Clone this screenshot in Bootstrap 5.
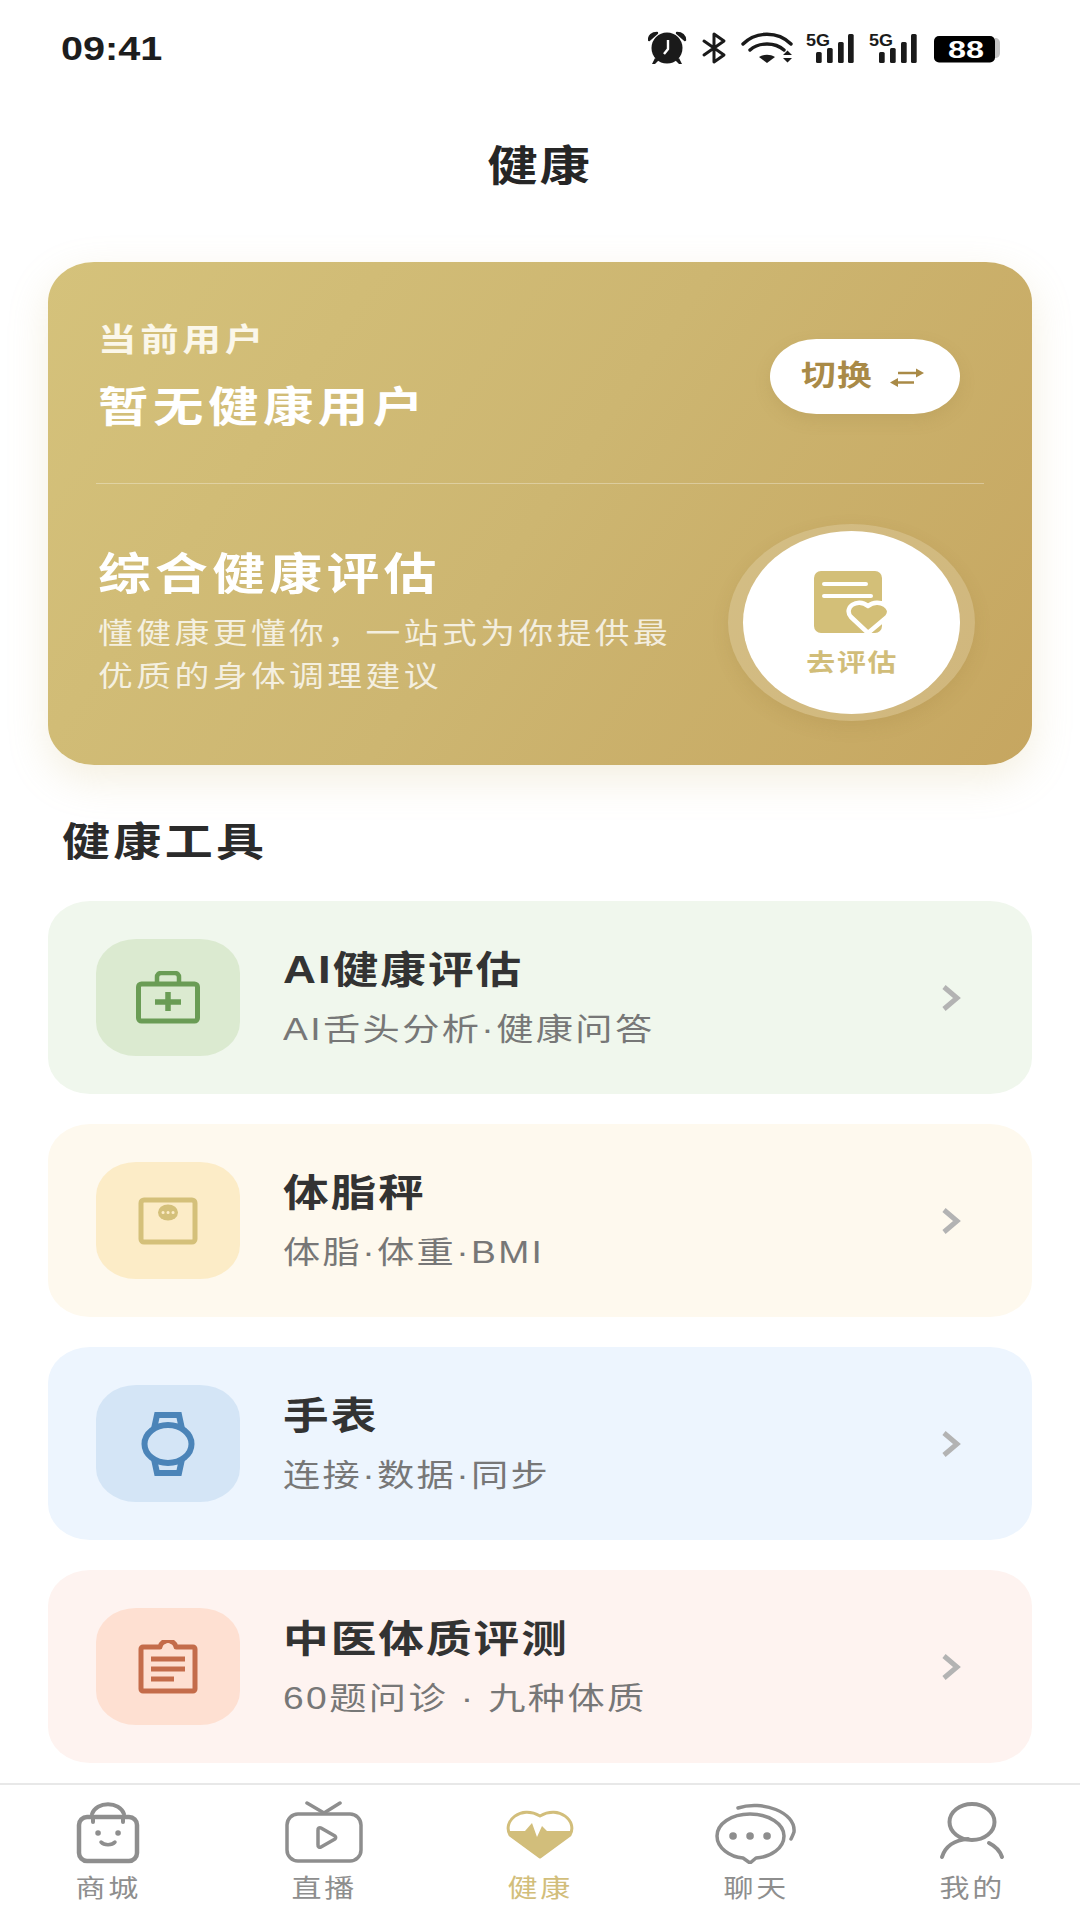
<!DOCTYPE html>
<html lang="zh-CN">
<head>
    <meta charset="UTF-8">
    <title>健康</title>
    <link href="https://cdn.jsdelivr.net/npm/bootstrap@5.3.0/dist/css/bootstrap.min.css" rel="stylesheet">
    <style>
        html, body { height: 100%; }
        body { font-family: "Liberation Sans", "Noto Sans CJK SC", sans-serif; background: #fff; color: #2b2b2b; }
        .phone { width: 1080px; height: 1920px; overflow: hidden; }

        /* the whole picture is a bit wider than tall, glyphs too */
        .wide { display: inline-block; transform: scaleX(1.2); transform-origin: 0 50%; white-space: nowrap; }
        .wide-c { display: inline-block; transform: scaleX(1.2); transform-origin: 50% 50%; white-space: nowrap; }

        .status-row { height: 96px; padding: 0 80px 0 61px; }
        .clock { font-size: 33px; font-weight: 700; line-height: 1; color: #1d1d1d; }
        .page-title { height: 142px; line-height: 142px; font-size: 42px; font-weight: 700; letter-spacing: 1.5px; color: #262626; }

        .hero { margin: 24px 48px 0; height: 503px; border: 0; color: #fff;
            border-radius: 46px / 40px;
            background: linear-gradient(125deg, #d5c27b 0%, #cdb671 50%, #c6a660 100%);
            box-shadow: 0 14px 40px rgba(205, 180, 115, .22); }
        .hero-top { height: 221px; padding: 8px 72px 0 50px; }
        .who-block { padding-bottom: 6px; }
        .who-label { font-size: 32px; font-weight: 700; line-height: 68px; letter-spacing: 3.2px; color: #fbf7ea; }
        .who-name { font-size: 42px; font-weight: 700; line-height: 68px; letter-spacing: 3.8px; }
        .switch-btn { width: 190px; height: 75px; border: 0; padding: 0 5px 0 0; background: #fff; color: #a98a47;
            border-radius: 47px / 38px; font-size: 29px; font-weight: 700; box-shadow: 0 6px 16px rgba(150, 120, 60, .18); }
        .switch-btn:hover { background: #fff; color: #a98a47; }
        .switch-txt { width: 70px; text-align: left; letter-spacing: 1px; }
        .hero-rule { height: 1px; margin: 0 48px; background: rgba(255, 255, 255, .32); }
        .hero-bottom { flex: 1; padding: 0 57px 5px 50px; }
        .assess-title { font-size: 44px; font-weight: 700; line-height: 60px; letter-spacing: 3.6px; margin-bottom: 8px; }
        .assess-desc { font-size: 29px; line-height: 43px; letter-spacing: 2.85px; color: rgba(255, 255, 255, .78); }
        .go-ring { padding: 7px 15px; border-radius: 50%; background: rgba(255, 255, 255, .17); box-shadow: 0 6px 18px rgba(130, 100, 40, .12); }
        .go-disc { width: 217px; height: 183px; border-radius: 50%; background: #fff; color: #d1bd79; gap: 17px; }
        .go-label { font-size: 24px; font-weight: 700; line-height: 1; letter-spacing: 1.5px; margin-left: 2px; }

        .tools-head { height: 136px; padding: 18px 0 0 62px; line-height: 118px; font-size: 40px; font-weight: 700; letter-spacing: 2.8px; color: #2b2b2b; }
        .tool-list { margin: 0 48px; gap: 30px; }
        .tool-row { height: 193px; border: 0; padding: 0 70px 0 48px; border-radius: 42px / 36px; }
        .tool-icon { width: 144px; height: 117px; border-radius: 40px / 34px; flex: none; }
        .tool-text { margin-left: 43px; }
        .tool-name { font-size: 38px; font-weight: 700; line-height: 56px; letter-spacing: 1.7px; color: #333; }
        .tool-sub { font-size: 31px; line-height: 48px; margin-top: 8px; letter-spacing: 2px; color: #777; }
        .tint-green { background: #f0f7ed; } .tint-green .tool-icon { background: #dbead0; }
        .tint-yellow { background: #fef9ee; } .tint-yellow .tool-icon { background: #fcecc7; }
        .tint-blue { background: #edf5fe; } .tint-blue .tool-icon { background: #d4e5f6; }
        .tint-red { background: #fef3f0; } .tint-red .tool-icon { background: #fee0d2; }

        .tab-bar { border-top: 2px solid #e8e8e8; height: 137px; }
        .tab-item { color: #8e8e8e; padding: 0; }
        .tab-item:hover, .tab-item:focus { color: #8e8e8e; }
        .tab-item.active-tab { color: #d2be7b; }
        .tab-art { height: 79px; }
        .tab-label { font-size: 25px; line-height: 48px; letter-spacing: 2.3px; }
    </style>
</head>
<body>
<div class="phone d-flex flex-column">

    <!-- status bar -->
    <div class="status-row d-flex align-items-center justify-content-between">
        <span class="clock wide">09:41</span>
        <svg width="352" height="34" viewBox="648 31 352 34" aria-hidden="true">
            <!-- alarm -->
            <g fill="#1a1a1a">
                <circle cx="667" cy="48" r="15.5"/>
                <path d="M649 40c0-4 3-7 8-7l-8 7zM685 40c0-4-3-7-8-7l8 7z" stroke="#1a1a1a" stroke-width="2.4" stroke-linejoin="round"/>
                <path d="M655 58l-3 6h3l4-4zM679 58l3 6h-3l-4-4z"/>
            </g>
            <path d="M668 40v9l-4 5" fill="none" stroke="#fff" stroke-width="2.4"/>
            <!-- bluetooth -->
            <path d="M704 41l20 14-10 7V34l10 7-20 14" fill="none" stroke="#1a1a1a" stroke-width="3" stroke-linejoin="round" stroke-linecap="round"/>
            <!-- wifi -->
            <g fill="none" stroke="#1a1a1a" stroke-width="3.4" stroke-linecap="round">
                <path d="M743 44c13-13 35-13 48 0"/>
                <path d="M750 50c9-8 25-8 34 0"/>
            </g>
            <path d="M759 57c5-3 11-3 16 0l-8 6z" fill="#1a1a1a"/>
            <path d="M783 55l4.500-4.500 4.500 4.500zM783 58h9l-4.500 4.500z" fill="#1a1a1a"/>
            <!-- 5G signal -->
            <g fill="#1a1a1a" font-family="Liberation Sans, sans-serif" font-weight="700" font-size="16">
                <text x="806" y="46" textLength="24" lengthAdjust="spacingAndGlyphs">5G</text>
                <rect x="816" y="52" width="5.700" height="11" rx="1.500"/><rect x="827" y="48" width="5.700" height="15" rx="1.500"/><rect x="838" y="42" width="5.700" height="21" rx="1.500"/><rect x="848" y="34" width="5.700" height="29" rx="1.500"/>
                <text x="869" y="46" textLength="24" lengthAdjust="spacingAndGlyphs">5G</text>
                <rect x="879" y="52" width="5.700" height="11" rx="1.500"/><rect x="890" y="48" width="5.700" height="15" rx="1.500"/><rect x="901" y="42" width="5.700" height="21" rx="1.500"/><rect x="911" y="34" width="5.700" height="29" rx="1.500"/>
            </g>
            <!-- battery -->
            <path d="M995 38c3 0 5 2 5 5v10c0 3-2 5-5 5z" fill="#c4c4c4"/>
            <rect x="934" y="36" width="61" height="26.500" rx="5" fill="#000"/>
            <text x="948" y="58" textLength="36" lengthAdjust="spacingAndGlyphs" fill="#fff" font-family="Liberation Sans, sans-serif" font-weight="700" font-size="24">88</text>
        </svg>
    </div>

    <div class="page-title text-center"><span class="wide-c">健康</span></div>

    <!-- current user + assessment -->
    <div class="card hero">
        <div class="hero-top d-flex align-items-center justify-content-between">
            <div class="who-block">
                <div class="who-label"><span class="wide">当前用户</span></div>
                <div class="who-name"><span class="wide">暂无健康用户</span></div>
            </div>
            <button type="button" class="btn switch-btn d-flex align-items-center justify-content-center">
                <span class="switch-txt"><span class="wide">切换</span></span>
                <svg class="ms-3" width="38" height="22" viewBox="0 0 38 22" aria-hidden="true">
                    <path d="M11 7h20M27 16.500H8" stroke="#a98a47" stroke-width="2.600" fill="none"/>
                    <path d="M29 2.500L37 7l-8 4.500zM11 12L3 16.500l8 4.500z" fill="#a98a47"/>
                </svg>
            </button>
        </div>
        <div class="hero-rule"></div>
        <div class="hero-bottom d-flex align-items-center justify-content-between">
            <div>
                <div class="assess-title"><span class="wide">综合健康评估</span></div>
                <div class="assess-desc"><span class="wide">懂健康更懂你，一站式为你提供最</span></div>
                <div class="assess-desc"><span class="wide">优质的身体调理建议</span></div>
            </div>
            <div class="go-ring">
                <div class="go-disc d-flex flex-column align-items-center justify-content-center">
                    <svg width="78" height="64" viewBox="0 0 78 64" aria-hidden="true">
                        <rect x="1" y="1" width="68" height="62" rx="7" fill="#d3bf78"/>
                        <path d="M11 14h42M11 26h47" stroke="#fff" stroke-width="4" stroke-linecap="round"/>
                        <path d="M55 63L38 47c-8-9 6-20 17-11 11-9 27 2 19 11z" fill="#d3bf78" stroke="#fff" stroke-width="4.500" stroke-linejoin="round"/>
                    </svg>
                    <span class="go-label wide-c">去评估</span>
                </div>
            </div>
        </div>
    </div>

    <div class="tools-head"><span class="wide">健康工具</span></div>

    <div class="tool-list d-flex flex-column">
        <div class="card tool-row tint-green flex-row align-items-center">
            <div class="tool-icon d-flex align-items-center justify-content-center">
                <svg width="66" height="53" viewBox="0 0 66 53" aria-hidden="true">
                    <rect x="3.500" y="13" width="59" height="37" rx="3" fill="none" stroke="#6a9c55" stroke-width="5"/>
                    <path d="M22 13V6a4 4 0 0 1 4-4h14a4 4 0 0 1 4 4v7" fill="none" stroke="#6a9c55" stroke-width="4.500"/>
                    <path d="M33 21v19M20 31h26" stroke="#6a9c55" stroke-width="5.500"/>
                </svg>
            </div>
            <div class="tool-text flex-grow-1">
                <div class="tool-name"><span class="wide">AI健康评估</span></div>
                <div class="tool-sub"><span class="wide">AI舌头分析·健康问答</span></div>
            </div>
            <svg width="22" height="30" viewBox="0 0 22 30" aria-hidden="true"><path d="M4 4l13 11L4 26" fill="none" stroke="#b3b3b3" stroke-width="5"/></svg>
        </div>

        <div class="card tool-row tint-yellow flex-row align-items-center">
            <div class="tool-icon d-flex align-items-center justify-content-center">
                <svg width="60" height="48" viewBox="0 0 60 48" aria-hidden="true">
                    <rect x="3" y="3" width="54" height="42" rx="3" fill="none" stroke="#d4c07a" stroke-width="5"/>
                    <ellipse cx="30" cy="15.500" rx="10" ry="8" fill="#d4c07a"/>
                    <path d="M25 15.500h.1M30 15.500h.1M35 15.500h.1" stroke="#fcecc7" stroke-width="3" stroke-linecap="round"/>
                </svg>
            </div>
            <div class="tool-text flex-grow-1">
                <div class="tool-name"><span class="wide">体脂秤</span></div>
                <div class="tool-sub"><span class="wide">体脂·体重·BMI</span></div>
            </div>
            <svg width="22" height="30" viewBox="0 0 22 30" aria-hidden="true"><path d="M4 4l13 11L4 26" fill="none" stroke="#b3b3b3" stroke-width="5"/></svg>
        </div>

        <div class="card tool-row tint-blue flex-row align-items-center">
            <div class="tool-icon d-flex align-items-center justify-content-center">
                <svg width="54" height="64" viewBox="0 0 54 64" aria-hidden="true">
                    <ellipse cx="27" cy="32" rx="23.500" ry="19" fill="none" stroke="#4b84b8" stroke-width="6"/>
                    <path d="M13 17L16 3h22l3 14M13 47l3 14h22l3-14" fill="none" stroke="#4b84b8" stroke-width="6"/>
                </svg>
            </div>
            <div class="tool-text flex-grow-1">
                <div class="tool-name"><span class="wide">手表</span></div>
                <div class="tool-sub"><span class="wide">连接·数据·同步</span></div>
            </div>
            <svg width="22" height="30" viewBox="0 0 22 30" aria-hidden="true"><path d="M4 4l13 11L4 26" fill="none" stroke="#b3b3b3" stroke-width="5"/></svg>
        </div>

        <div class="card tool-row tint-red flex-row align-items-center">
            <div class="tool-icon d-flex align-items-center justify-content-center">
                <svg width="60" height="54" viewBox="0 0 60 54" aria-hidden="true">
                    <path d="M22 7c1-8 15-8 16 0h17a2 2 0 0 1 2 2v40a2 2 0 0 1-2 2H5a2 2 0 0 1-2-2V9a2 2 0 0 1 2-2z" fill="#c46c4a" fill-opacity="0" stroke="#c46c4a" stroke-width="5" stroke-linejoin="round"/>
                    <circle cx="30" cy="5.500" r="2.500" fill="#fee0d2"/>
                    <path d="M13 19h34M13 29h34M13 39h23" stroke="#c46c4a" stroke-width="5"/>
                </svg>
            </div>
            <div class="tool-text flex-grow-1">
                <div class="tool-name"><span class="wide">中医体质评测</span></div>
                <div class="tool-sub"><span class="wide">60题问诊 · 九种体质</span></div>
            </div>
            <svg width="22" height="30" viewBox="0 0 22 30" aria-hidden="true"><path d="M4 4l13 11L4 26" fill="none" stroke="#b3b3b3" stroke-width="5"/></svg>
        </div>
    </div>

    <!-- bottom tabs -->
    <nav class="nav nav-justified tab-bar mt-auto">
        <a class="nav-link tab-item" href="#">
            <div class="tab-art d-flex align-items-end justify-content-center">
                <svg width="66" height="62" viewBox="0 0 66 62" fill="none" stroke="#8e8e8e" stroke-linecap="round" aria-hidden="true">
                    <path d="M17 12C21-1 45-1 49 12" stroke-width="4"/>
                    <rect x="4" y="15" width="58" height="44" rx="8" stroke-width="4.500"/>
                    <path d="M18 15v5M48 15v5" stroke-width="4"/>
                    <path d="M23 31h.1M43 31h.1" stroke-width="5.500"/>
                    <path d="M26 40c3 3.500 11 3.500 14 0" stroke-width="3.500"/>
                </svg>
            </div>
            <div class="tab-label"><span class="wide-c">商城</span></div>
        </a>
        <a class="nav-link tab-item" href="#">
            <div class="tab-art d-flex align-items-end justify-content-center">
                <svg width="78" height="63" viewBox="0 0 78 63" fill="none" stroke="#8e8e8e" stroke-linecap="round" stroke-linejoin="round" aria-hidden="true">
                    <path d="M22 2l17 10L55 2" stroke-width="3.500"/>
                    <rect x="2" y="13" width="74" height="47" rx="11" stroke-width="3.500"/>
                    <path d="M33 29a2 2 0 0 1 3-2l14 8a2 2 0 0 1 0 3l-14 8a2 2 0 0 1-3-2z" stroke-width="3.500"/>
                </svg>
            </div>
            <div class="tab-label"><span class="wide-c">直播</span></div>
        </a>
        <a class="nav-link tab-item active-tab" href="#">
            <div class="tab-art d-flex align-items-end justify-content-center">
                <svg width="70" height="52" viewBox="0 0 70 52" aria-hidden="true" class="mb-1">
                    <path d="M35 49L5 27C-3 13 16-3 35 8c19-11 38 5 30 19z" fill="#fff" stroke="#d2be7b" stroke-width="3" stroke-linejoin="round"/>
                    <path d="M3 23h17l7-8 5 14 5-11 5 5h25c-1 3-2 5-4 6L35 50 5 28c-1-1-2-3-2-5z" fill="#d2be7b"/>
                </svg>
            </div>
            <div class="tab-label"><span class="wide-c">健康</span></div>
        </a>
        <a class="nav-link tab-item" href="#">
            <div class="tab-art d-flex align-items-end justify-content-center">
                <svg width="82" height="62" viewBox="0 0 82 62" fill="none" stroke="#8e8e8e" stroke-linecap="round" aria-hidden="true">
                    <path d="M23 6c24-8 58 4 56 24-1 3-2 5-3 7" stroke-width="3.500"/>
                    <path d="M35 12C16 12 2 22 2 34s13 21 26 22l7 5 6-5c15-1 28-10 28-22S54 12 35 12z" stroke-width="3.500" stroke-linejoin="round"/>
                    <path d="M18 34h.1M35 34h.1M52 34h.1" stroke-width="7.500"/>
                </svg>
            </div>
            <div class="tab-label"><span class="wide-c">聊天</span></div>
        </a>
        <a class="nav-link tab-item" href="#">
            <div class="tab-art d-flex align-items-end justify-content-center">
                <svg width="66" height="58" viewBox="0 0 66 58" fill="none" stroke="#8e8e8e" stroke-linecap="round" aria-hidden="true" class="mb-1">
                    <ellipse cx="33" cy="20" rx="22.500" ry="18" stroke-width="4"/>
                    <path d="M3 55C6 45 15 38 29 37" stroke-width="4"/>
                    <path d="M50 41c6 3 11 8 13 14" stroke-width="4"/>
                </svg>
            </div>
            <div class="tab-label"><span class="wide-c">我的</span></div>
        </a>
    </nav>
</div>
<script src="https://cdn.jsdelivr.net/npm/bootstrap@5.3.0/dist/js/bootstrap.bundle.min.js"></script>
</body>
</html>
